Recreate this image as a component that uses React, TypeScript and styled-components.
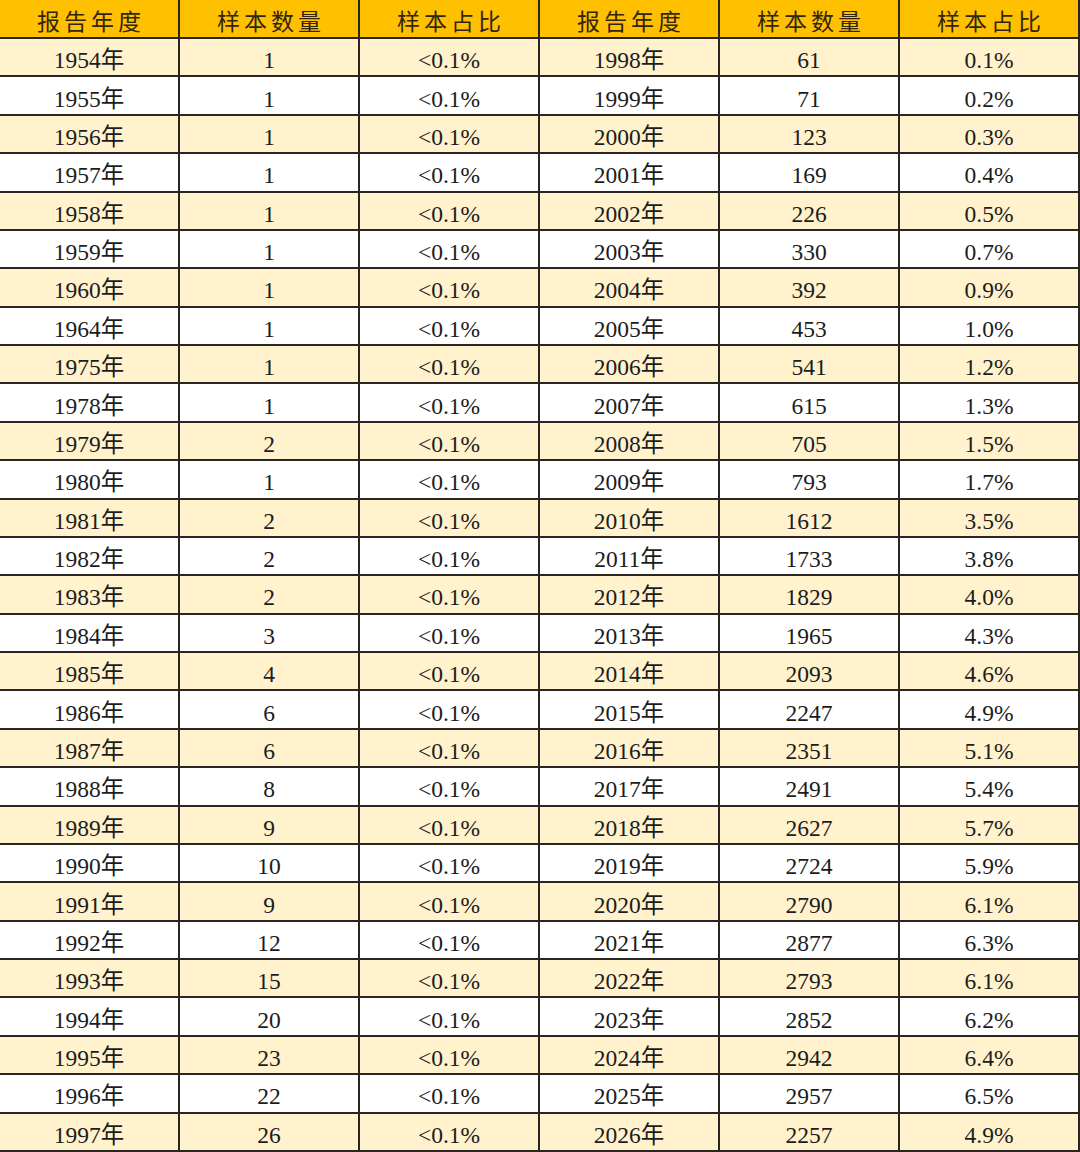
import React from 'react';
import styled, { createGlobalStyle } from 'styled-components';

const GlobalStyle = createGlobalStyle`
  html, body {
    margin: 0;
    padding: 0;
    background: #ffffff;
  }
`;

const left: [string, string, string][] = [
  ['1954年', '1', '<0.1%'],
  ['1955年', '1', '<0.1%'],
  ['1956年', '1', '<0.1%'],
  ['1957年', '1', '<0.1%'],
  ['1958年', '1', '<0.1%'],
  ['1959年', '1', '<0.1%'],
  ['1960年', '1', '<0.1%'],
  ['1964年', '1', '<0.1%'],
  ['1975年', '1', '<0.1%'],
  ['1978年', '1', '<0.1%'],
  ['1979年', '2', '<0.1%'],
  ['1980年', '1', '<0.1%'],
  ['1981年', '2', '<0.1%'],
  ['1982年', '2', '<0.1%'],
  ['1983年', '2', '<0.1%'],
  ['1984年', '3', '<0.1%'],
  ['1985年', '4', '<0.1%'],
  ['1986年', '6', '<0.1%'],
  ['1987年', '6', '<0.1%'],
  ['1988年', '8', '<0.1%'],
  ['1989年', '9', '<0.1%'],
  ['1990年', '10', '<0.1%'],
  ['1991年', '9', '<0.1%'],
  ['1992年', '12', '<0.1%'],
  ['1993年', '15', '<0.1%'],
  ['1994年', '20', '<0.1%'],
  ['1995年', '23', '<0.1%'],
  ['1996年', '22', '<0.1%'],
  ['1997年', '26', '<0.1%'],
];

const right: [string, string, string][] = [
  ['1998年', '61', '0.1%'],
  ['1999年', '71', '0.2%'],
  ['2000年', '123', '0.3%'],
  ['2001年', '169', '0.4%'],
  ['2002年', '226', '0.5%'],
  ['2003年', '330', '0.7%'],
  ['2004年', '392', '0.9%'],
  ['2005年', '453', '1.0%'],
  ['2006年', '541', '1.2%'],
  ['2007年', '615', '1.3%'],
  ['2008年', '705', '1.5%'],
  ['2009年', '793', '1.7%'],
  ['2010年', '1612', '3.5%'],
  ['2011年', '1733', '3.8%'],
  ['2012年', '1829', '4.0%'],
  ['2013年', '1965', '4.3%'],
  ['2014年', '2093', '4.6%'],
  ['2015年', '2247', '4.9%'],
  ['2016年', '2351', '5.1%'],
  ['2017年', '2491', '5.4%'],
  ['2018年', '2627', '5.7%'],
  ['2019年', '2724', '5.9%'],
  ['2020年', '2790', '6.1%'],
  ['2021年', '2877', '6.3%'],
  ['2022年', '2793', '6.1%'],
  ['2023年', '2852', '6.2%'],
  ['2024年', '2942', '6.4%'],
  ['2025年', '2957', '6.5%'],
  ['2026年', '2257', '4.9%'],
];

const headers = ['报告年度', '样本数量', '样本占比', '报告年度', '样本数量', '样本占比'];

const Table = styled.div`
  width: 1080px;
  height: 1152px;
  box-sizing: border-box;
  display: grid;
  grid-template-columns: repeat(6, 1fr);
  grid-template-rows: 37px repeat(29, 1fr);
  gap: 2px;
  padding: 0 2px 2px 0;
  background: #2a2520;
`;

const HeadCell = styled.div`
  background: #ffc000;
  color: #33250c;
  display: flex;
  align-items: center;
  justify-content: center;
  font-family: "Noto Sans CJK SC", sans-serif;
  font-size: 23px;
  line-height: 26px;
  letter-spacing: 4px;
  padding-left: 4px;
  padding-top: 3px;
`;

const Cell = styled.div<{ $shade: boolean }>`
  background: ${p => (p.$shade ? '#fff2cc' : '#ffffff')};
  color: #1c1c1c;
  display: flex;
  align-items: center;
  justify-content: center;
  font-family: "Liberation Serif", "Noto Sans CJK SC", serif;
  font-size: 23.5px;
  line-height: 26px;
  padding-top: 6px;
`;

export default function App() {
  return (
    <>
      <GlobalStyle />
      <Table>
        {headers.map((h, i) => (
          <HeadCell key={`h${i}`}>{h}</HeadCell>
        ))}
        {left.map((row, r) => {
          const cells = [...row, ...right[r]];
          return cells.map((c, i) => (
            <Cell key={`${r}-${i}`} $shade={r % 2 === 0}>
              {c}
            </Cell>
          ));
        })}
      </Table>
    </>
  );
}
